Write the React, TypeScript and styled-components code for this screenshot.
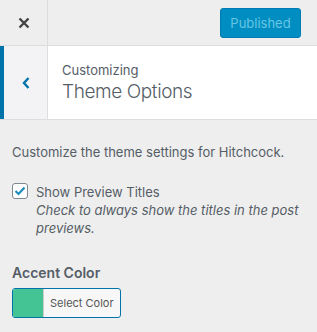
import React from "react";
import styled, { createGlobalStyle } from "styled-components";

const GlobalStyle = createGlobalStyle`
  html, body {
    margin: 0;
    padding: 0;
    background: #eeeeee;
  }
  body {
    font-family: Inter, "Liberation Sans", Arial, sans-serif;
    color: #555d66;
  }
`;

const Panel = styled.div`
  width: 317px;
  height: 332px;
  background: #eeeeee;
  overflow: hidden;
`;

const HeaderBar = styled.div`
  display: flex;
  align-items: center;
  height: 45px;
  border-bottom: 1px solid #dddddd;
`;

const CloseButton = styled.div`
  width: 47px;
  height: 45px;
  display: flex;
  align-items: center;
  justify-content: center;
  border-right: 1px solid #dddddd;
  color: #444;
`;

const Spacer = styled.div`
  flex: 1;
`;

const PublishButton = styled.div`
  margin-right: 16px;
  box-sizing: border-box;
  width: 81px;
  height: 30px;
  display: flex;
  align-items: center;
  justify-content: center;
  background: #008ec2;
  border: 1px solid #007cb2;
  border-radius: 3px;
  color: #66c6e4;
  font-size: 13px;
`;

const SectionHeader = styled.div`
  display: flex;
  height: 73px;
  background: #ffffff;
  border-bottom: 1px solid #dddddd;
`;

const BackButton = styled.div`
  width: 43px;
  border-left: 4px solid #0073aa;
  border-right: 1px solid #dddddd;
  background: #f3f3f5;
  display: flex;
  align-items: center;
  justify-content: center;
  color: #0073aa;
`;

const TitleBlock = styled.div`
  padding: 15px 10px 0 14px;
`;

const Eyebrow = styled.div`
  font-size: 13px;
  line-height: 18px;
  color: #555d66;
`;

const Title = styled.div`
  font-size: 19px;
  font-weight: 300;
  line-height: 26px;
  letter-spacing: -0.4px;
  color: #555d66;
`;

const Content = styled.div`
  padding: 23px 12px 0 12px;
`;

const Description = styled.p`
  margin: 0;
  font-size: 13px;
  line-height: 18px;
  color: #555d66;
`;

const CheckRow = styled.div`
  display: flex;
  align-items: flex-start;
  margin-top: 22px;
`;

const CheckBox = styled.span`
  flex: none;
  box-sizing: border-box;
  width: 16px;
  height: 16px;
  margin-right: 8px;
  border: 1px solid #7e8993;
  border-radius: 3px;
  background: #ffffff;
  display: flex;
  align-items: center;
  justify-content: center;
`;

const CheckText = styled.div`
  display: flex;
  flex-direction: column;
`;

const CheckLabel = styled.span`
  font-size: 13px;
  line-height: 18px;
  color: #555d66;
`;

const CheckHint = styled.span`
  font-size: 13px;
  line-height: 18px;
  font-style: italic;
  color: #555d66;
`;

const ControlTitle = styled.div`
  margin-top: 26px;
  font-size: 14px;
  font-weight: 600;
  line-height: 20px;
  color: #555d66;
`;

const ColorButton = styled.div`
  margin-top: 5px;
  display: inline-flex;
  box-sizing: border-box;
  height: 30px;
  border: 1px solid #0073aa;
  border-radius: 3px;
  overflow: hidden;
  background: #f7f7f7;
`;

const Swatch = styled.span<{ $color: string }>`
  width: 30px;
  background: ${(p) => p.$color};
  border-right: 1px solid #cccccc;
`;

const ColorLabel = styled.span`
  padding: 0 6px;
  display: flex;
  align-items: center;
  font-size: 11px;
  color: #555555;
`;

const App: React.FC = () => {
  return (
    <Panel>
      <GlobalStyle />
      <HeaderBar>
        <CloseButton>
          <svg width="12" height="12" viewBox="0 0 12 12">
            <path d="M1.5 1.5 L10.5 10.5 M10.5 1.5 L1.5 10.5" stroke="currentColor" strokeWidth="2.4" />
          </svg>
        </CloseButton>
        <Spacer />
        <PublishButton>Published</PublishButton>
      </HeaderBar>
      <SectionHeader>
        <BackButton>
          <svg width="8" height="12" viewBox="0 0 8 12">
            <path d="M6.5 1 L2 6 L6.5 11" fill="none" stroke="currentColor" strokeWidth="2.4" />
          </svg>
        </BackButton>
        <TitleBlock>
          <Eyebrow>Customizing</Eyebrow>
          <Title>Theme Options</Title>
        </TitleBlock>
      </SectionHeader>
      <Content>
        <Description>Customize the theme settings for Hitchcock.</Description>
        <CheckRow>
          <CheckBox>
            <svg width="12" height="10" viewBox="0 0 12 10">
              <path d="M1.5 5 L4.5 8 L10.5 1.5" fill="none" stroke="#1e8cbe" strokeWidth="2.2" />
            </svg>
          </CheckBox>
          <CheckText>
            <CheckLabel>Show Preview Titles</CheckLabel>
            <CheckHint>Check to always show the titles in the post previews.</CheckHint>
          </CheckText>
        </CheckRow>
        <ControlTitle>Accent Color</ControlTitle>
        <ColorButton>
          <Swatch $color="#44c495" />
          <ColorLabel>Select Color</ColorLabel>
        </ColorButton>
      </Content>
    </Panel>
  );
};

export default App;
